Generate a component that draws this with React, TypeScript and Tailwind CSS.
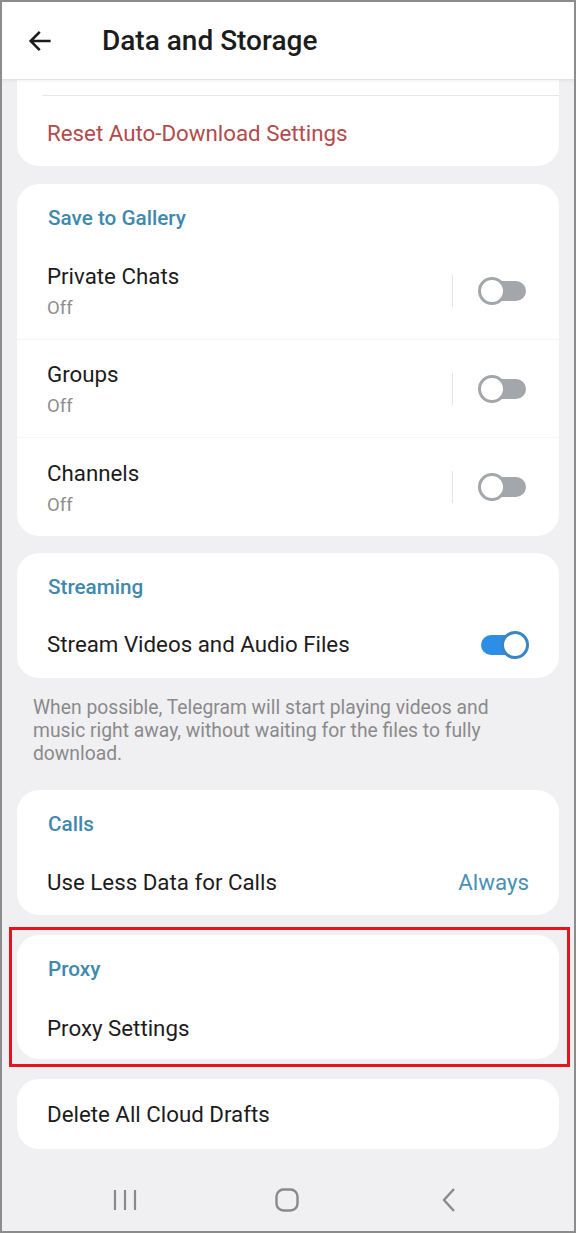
import React from "react";

const font = { fontFamily: "Roboto, 'Noto Sans', sans-serif" };

function Toggle({ on }: { on: boolean }) {
  if (on) {
    return (
      <div className="relative w-[48px] h-[28px]">
        <div className="absolute left-0 right-[8px] top-[4px] h-[20px] rounded-full bg-[#2d8ee6]" />
        <div className="absolute right-0 top-0 w-[28px] h-[28px] rounded-full bg-white border-[3px] border-[#3a85c4]" />
      </div>
    );
  }
  return (
    <div className="relative w-[48px] h-[28px]">
      <div className="absolute left-[8px] right-0 top-[4px] h-[20px] rounded-full bg-[#a3a6aa]" />
      <div className="absolute left-0 top-0 w-[28px] h-[28px] rounded-full bg-white border-[3px] border-[#a3a6aa]" />
    </div>
  );
}

function SectionHeader({ children }: { children: React.ReactNode }) {
  return (
    <div className="h-[58px] pt-[20px] pl-[31px]">
      <div className="text-[20.7px] leading-[28px] font-medium text-[#3f89ad]">{children}</div>
    </div>
  );
}

function GalleryRow({ title, last }: { title: string; last?: boolean }) {
  return (
    <div className={`h-[98px] flex items-center pl-[30px] pr-[33px] ${last ? "" : "border-b border-[#f6f6f6]"}`}>
      <div className="flex-1">
        <div className="text-[22.3px] leading-[30px] text-[#1c1c1c]">{title}</div>
        <div className="text-[18.5px] leading-[24px] text-[#8e8e8e] mt-[5px]">Off</div>
      </div>
      <div className="w-px h-[32px] bg-[#e4e4e4] mr-[25px]" />
      <Toggle on={false} />
    </div>
  );
}

export default function App() {
  return (
    <div
      style={font}
      className="w-[576px] h-[1233px] bg-[#f0f0f3] border-2 border-[#8c8c8c] flex flex-col overflow-hidden"
    >
      {/* Top bar */}
      <div className="h-[78px] bg-white flex items-center shrink-0 border-b border-[#e2e2e2] shadow-[0_1px_3px_rgba(0,0,0,0.06)] relative z-10">
        <div className="w-[100px] pl-[24px] flex items-center">
          <svg width="28" height="28" viewBox="0 0 24 24" fill="none" stroke="#1c1c1c" strokeWidth="2.2" strokeLinecap="square">
            <path d="M20 12H4.5M11 5l-7 7 7 7" />
          </svg>
        </div>
        <div className="text-[28px] font-medium text-[#1c1c1c]">Data and Storage</div>
      </div>

      <div className="flex flex-col px-[15px] flex-1">
        {/* Card 1 */}
        <div className="bg-white rounded-b-[22px]">
          <div className="h-[16px] border-b border-[#e6e6e6] ml-[25px]" />
          <div className="h-[70px] flex items-center pl-[30px] pt-[5px]">
            <div className="text-[22.3px] text-[#b34a4c]">Reset Auto-Download Settings</div>
          </div>
        </div>

        {/* Card 2 */}
        <div className="bg-white rounded-[22px] mt-[18px]">
          <SectionHeader>Save to Gallery</SectionHeader>
          <div>
            <GalleryRow title="Private Chats" />
            <GalleryRow title="Groups" />
            <GalleryRow title="Channels" last />
          </div>
        </div>

        {/* Card 3 */}
        <div className="bg-white rounded-[22px] mt-[17px]">
          <SectionHeader>Streaming</SectionHeader>
          <div className="h-[67px] flex items-center pl-[30px] pr-[30px] pt-[1px]">
            <div className="flex-1 text-[22.3px] text-[#1c1c1c]">Stream Videos and Audio Files</div>
            <Toggle on />
          </div>
        </div>

        <div className="pl-[16px] pr-[50px] pt-[18px] pb-[25px] text-[19.3px] leading-[23px] text-[#8a8a8a]">
          When possible, Telegram will start playing videos and music right away, without waiting for the files to fully download.
        </div>

        {/* Card 4 */}
        <div className="bg-white rounded-[22px]">
          <SectionHeader>Calls</SectionHeader>
          <div className="h-[67px] flex items-center pl-[30px] pr-[30px] pt-[3px]">
            <div className="flex-1 text-[22.3px] text-[#1c1c1c]">Use Less Data for Calls</div>
            <div className="text-[22.3px] text-[#4a90b5]">Always</div>
          </div>
        </div>

        {/* Card 5 with highlight */}
        <div className="relative mt-[20px]">
          <div className="bg-white rounded-[22px]">
            <SectionHeader>Proxy</SectionHeader>
            <div className="h-[66px] flex items-center pl-[30px] pt-[6px]">
              <div className="text-[22.3px] text-[#1c1c1c]">Proxy Settings</div>
            </div>
          </div>
          <div className="absolute -left-[8px] -right-[11px] -top-[8px] -bottom-[8px] border-[3px] border-[#e8141c] pointer-events-none" />
        </div>

        {/* Card 6 */}
        <div className="bg-white rounded-[22px] mt-[20px] h-[70px] flex items-center pl-[30px] pt-[1px]">
          <div className="text-[22.3px] text-[#1c1c1c]">Delete All Cloud Drafts</div>
        </div>

        {/* Nav bar */}
        <div className="flex-1 flex items-center pt-[20px]">
          <div className="w-[216px] flex justify-center">
            <svg width="24" height="22" viewBox="0 0 24 22" fill="none" stroke="#8a8a8a" strokeWidth="2.2">
              <path d="M2 1v20M12 1v20M22 1v20" />
            </svg>
          </div>
          <div className="w-[108px] flex justify-center">
            <svg width="26" height="26" viewBox="0 0 26 26" fill="none" stroke="#8a8a8a" strokeWidth="2.4">
              <rect x="2.5" y="2.5" width="21" height="21" rx="7" />
            </svg>
          </div>
          <div className="w-[216px] flex justify-center">
            <svg width="18" height="26" viewBox="0 0 18 26" fill="none" stroke="#8a8a8a" strokeWidth="2.4">
              <path d="M14 2L4 13l10 11" />
            </svg>
          </div>
        </div>
      </div>
    </div>
  );
}
